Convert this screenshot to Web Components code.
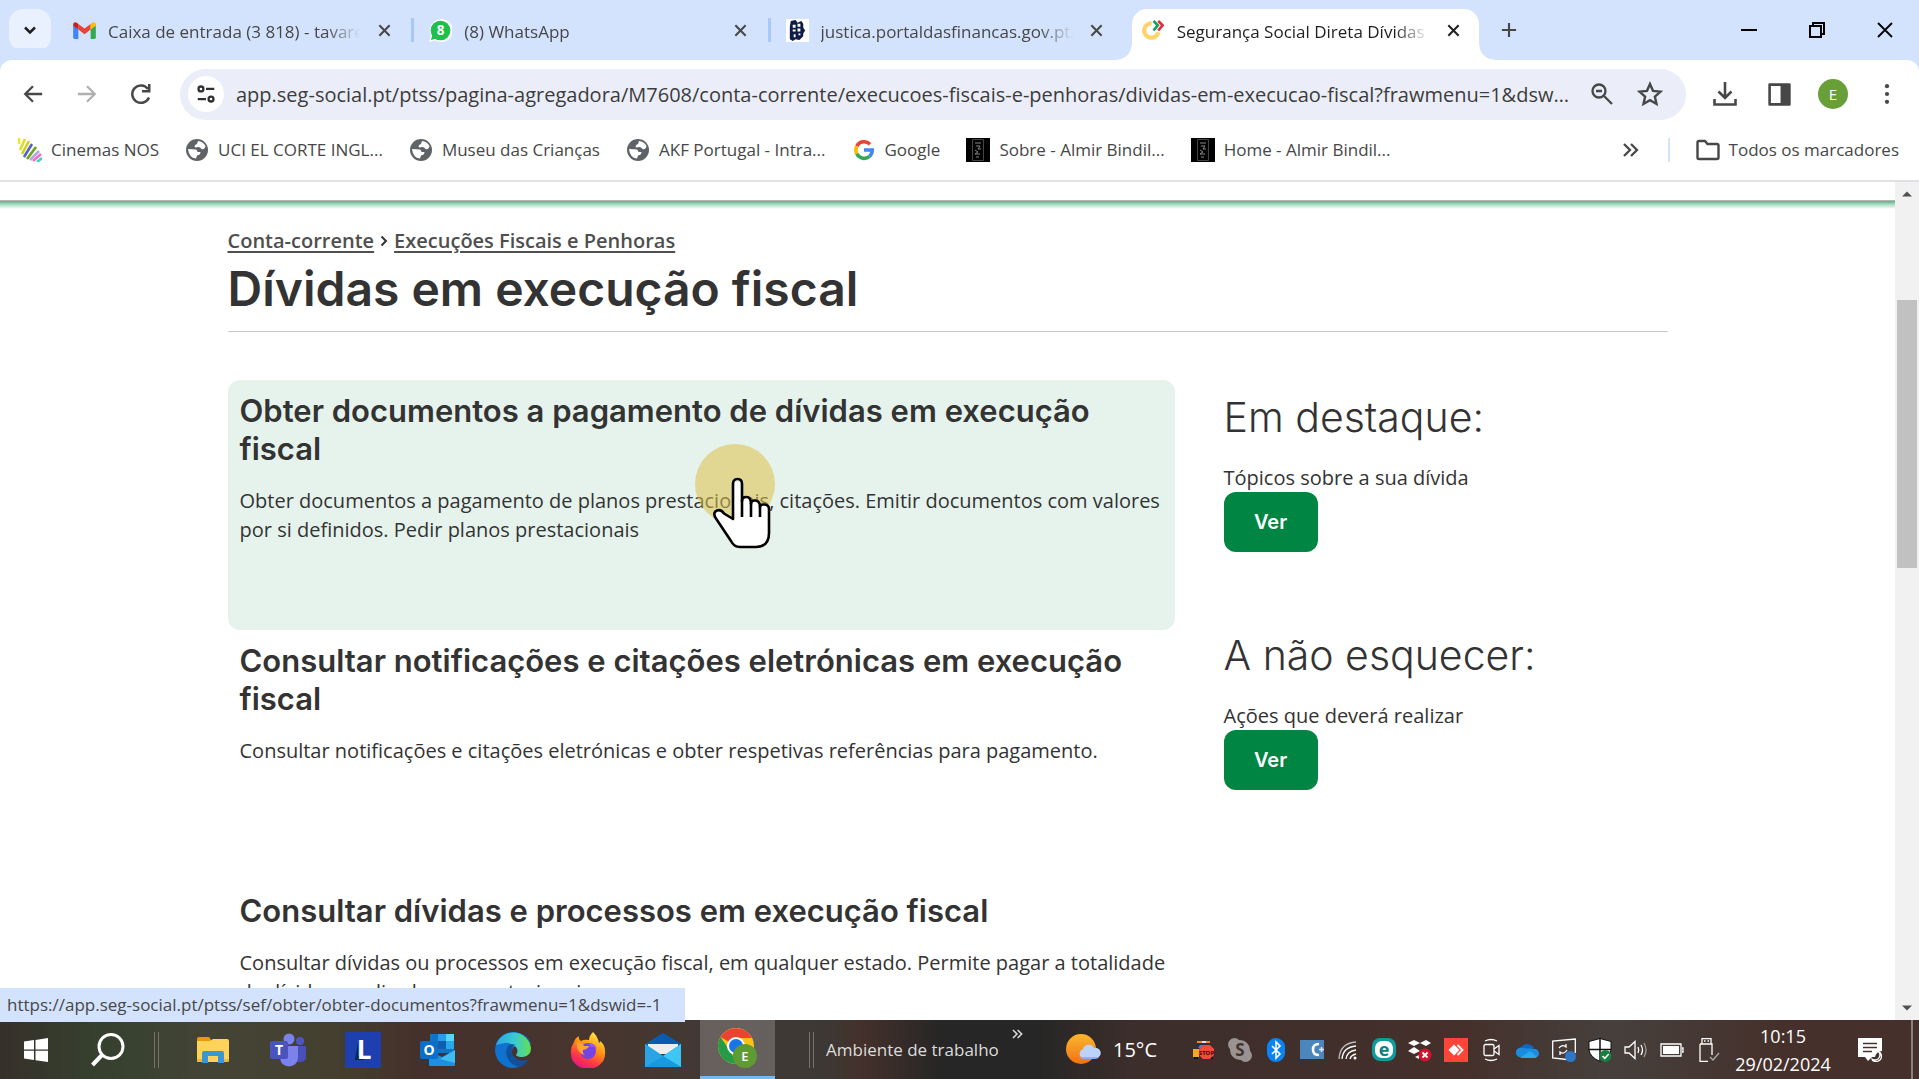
<!DOCTYPE html>
<html lang="pt">
<head>
<meta charset="utf-8">
<title>Segurança Social Direta Dívidas</title>
<style>
  html, body { height: 100%; margin: 0; }
  body {
    display: flex;
    flex-direction: column;
    overflow: hidden;
    background: #fff;
    color: #474747;
    font: 17px/24px "Open Sans", "Noto Sans", sans-serif;
  }
</style>
</head>
<body>

<tab-strip>
  <browser-tab icon="gmail" label="Caixa de entrada (3 818) - tavares"></browser-tab>
  <browser-tab icon="whatsapp" label="(8) WhatsApp"></browser-tab>
  <browser-tab icon="financas" label="justica.portaldasfinancas.gov.pt/"></browser-tab>
  <browser-tab icon="segsocial" label="Segurança Social Direta Dívidas" active></browser-tab>
</tab-strip>
<nav-bar url="app.seg-social.pt/ptss/pagina-agregadora/M7608/conta-corrente/execucoes-fiscais-e-penhoras/dividas-em-execucao-fiscal?frawmenu=1&amp;dswid=-1"></nav-bar>
<bookmarks-bar>
  <book-mark icon="nos">Cinemas NOS</book-mark>
  <book-mark icon="globe">UCI EL CORTE INGL...</book-mark>
  <book-mark icon="globe">Museu das Crianças</book-mark>
  <book-mark icon="globe">AKF Portugal - Intra...</book-mark>
  <book-mark icon="google">Google</book-mark>
  <book-mark icon="almir">Sobre - Almir Bindil...</book-mark>
  <book-mark icon="almir">Home - Almir Bindil...</book-mark>
  <book-mark slot="end" icon="folder">Todos os marcadores</book-mark>
</bookmarks-bar>

<page-view status="https://app.seg-social.pt/ptss/sef/obter/obter-documentos?frawmenu=1&amp;dswid=-1">
  <page-title>
    <a slot="path" href="#conta-corrente">Conta-corrente</a>
    <a slot="parent" href="#execucoes">Execuções Fiscais e Penhoras</a>
    Dívidas em execução fiscal
  </page-title>
  <topic-card slot="topics" heading="Obter documentos a pagamento de dívidas em execução fiscal" hovered>Obter documentos a pagamento de planos prestacionais, citações. Emitir documentos com valores por si definidos. Pedir planos prestacionais</topic-card>
  <topic-card slot="topics" heading="Consultar notificações e citações eletrónicas em execução fiscal">Consultar notificações e citações eletrónicas e obter respetivas referências para pagamento.</topic-card>
  <topic-card slot="topics" heading="Consultar dívidas e processos em execução fiscal">Consultar dívidas ou processos em execução fiscal, em qualquer estado. Permite pagar a totalidade da dívida e pedir planos prestacionais.</topic-card>
  <side-note slot="aside" heading="Em destaque:">Tópicos sobre a sua dívida</side-note>
  <side-note slot="aside" heading="A não esquecer:">Ações que deverá realizar</side-note>
</page-view>

<task-bar></task-bar>

<script>
// name: [viewBox width, viewBox height, markup]
const ICONS = {
  down: [24, 24, '<path d="M6 9l6 6 6-6" fill="none" stroke="#1f1f1f" stroke-width="3"/>'],
  close: [16, 16, '<path d="M2.5 2.5l11 11M13.5 2.5l-11 11" stroke="currentColor" stroke-width="2.2"/>'],
  plus: [18, 18, '<path d="M9 1v16M1 9h16" stroke="#474747" stroke-width="2.4"/>'],
  minimize: [16, 16, '<path d="M0 8h16" stroke="#000" stroke-width="2"/>'],
  restore: [16, 16, '<path d="M1 4h11v11H1zM4 4V1h11v11h-3" fill="none" stroke="#000" stroke-width="2"/>'],
  quit: [16, 16, '<path d="M1 1l14 14M15 1L1 15" stroke="#000" stroke-width="1.8"/>'],
  gmail: [24, 18, '<path d="M0 3v13.500q0 1.500 1.500 1.500H5.500V8z" fill="#4285f4"/><path d="M24 3v13.500q0 1.500-1.500 1.500H18.500V8z" fill="#34a853"/><path d="M5.500 8V2L12 7l6.500-5v6L12 13z" fill="#ea4335"/><path d="M18.500 8V2l1.300-1Q22-.5 23.500 1 24 1.500 24 4z" fill="#fbbc04"/><path d="M5.500 8V2L4.200 1Q2-.5.5 1 0 1.500 0 4z" fill="#c5221f"/>'],
  whatsapp: [24, 24, '<path d="M0 24l2-7A12 12 0 1 1 7 22.500z" fill="#fff"/><circle cx="12" cy="12" r="10.300" fill="#1fbf4b"/><path d="M2 22l2-7 5 5z" fill="#1fbf4b"/><text x="12" y="17" font-size="14" font-weight="700" text-anchor="middle" fill="#fff">8</text>'],
  financas: [24, 24, '<path d="M0 0h24v24H0z" fill="#fff"/><path d="M5 2l5-1 2 3 4-2 2 3v4l2 3-2 3v3l-4 4-4-1-3 2-3-2V8z" fill="#0d1d45"/><path d="M7 6h3v3H7zM12 5h3v3h-3zM7 11h3v2H7zM12 10h3v3h-3zM8 16h2v3H8zM13 15h2v2h-2z" fill="#fff"/>'],
  segsocial: [24, 22, '<path d="M10 3.500A7.500 7.500 0 1 0 17 13" fill="none" stroke="#ffd166" stroke-width="4.500"/><path d="M12 1l4.500 4.500L12 11" fill="none" stroke="#12a25a" stroke-width="2.800"/><path d="M17 1l4.500 4.500L17 11" fill="none" stroke="#e6293c" stroke-width="2.800"/>'],
  back: [24, 24, '<path d="M22 12H4M12 3.500L3.500 12l8.500 8.500" fill="none" stroke="#474747" stroke-width="2.500"/>'],
  forward: [24, 24, '<path d="M2 12h18M12 3.500l8.500 8.500-8.500 8.500" fill="none" stroke="#b0b0b0" stroke-width="2.500"/>'],
  reload: [24, 24, '<path d="M20 15.500A8.700 8.700 0 1 1 19 7" fill="none" stroke="#474747" stroke-width="2.500"/><path d="M21.500 2v8.500H13V8h6V2z" fill="#474747"/>'],
  tune: [24, 24, '<g fill="none" stroke="#303030" stroke-width="2.500"><circle cx="6.500" cy="6.500" r="2.700"/><circle cx="17.500" cy="17.500" r="2.700"/><path d="M12 6.500h9M3 17.500h9"/></g>'],
  zoomout: [24, 24, '<g fill="none" stroke="#474747" stroke-width="2.300"><circle cx="9" cy="9" r="6.500"/><path d="M14 14l8 8M6 9h6"/></g>'],
  star: [24, 24, '<path d="M12 2.800l2.800 6.300 6.900.7-5.200 4.600 1.500 6.800-6-3.500-6 3.500 1.500-6.800-5.200-4.600 6.900-.7z" fill="none" stroke="#474747" stroke-width="2.200"/>'],
  download: [24, 24, '<path d="M12 0v15M5.500 9.500l6.500 6.500 6.500-6.500M1.500 17v5.500h21V17" fill="none" stroke="#474747" stroke-width="2.600"/>'],
  panel: [24, 24, '<path d="M2.500 2.500h19v19h-19z" fill="none" stroke="#474747" stroke-width="2.500" stroke-linejoin="round"/><path d="M13 2h9v20h-9z" fill="#474747"/>'],
  more: [24, 24, '<g fill="#474747"><circle cx="12" cy="3.500" r="2.300"/><circle cx="12" cy="12" r="2.300"/><circle cx="12" cy="20.500" r="2.300"/></g>'],
  nos: [24, 24, '<g stroke-width="2.600"><path d="M1 0v6" stroke="#f5e51b"/><path d="M7 1L2 12" stroke="#d9e021"/><path d="M11 3L4 16" stroke="#d1cf1e"/><path d="M14 6L6 19" stroke="#5361c4"/><path d="M18 9L9 21" stroke="#6fa31f"/><path d="M21 13l-9 9" stroke="#b6a6e0"/><path d="M23 16l-8 7" stroke="#f26fc6"/><path d="M24 20l-5 4" stroke="#36d6c4"/></g>'],
  globe: [24, 24, '<circle cx="12" cy="12" r="11" fill="#5f6368"/><path d="M3 11q4 0 8 .5 1.500 1 1.500 2.500h3q0 3-3.500 3.500L11 20.500Q4 20 3 11zM9.500 8.500q0-2 2.500-2.500l1-3q5 .5 7.500 5-1 4-4 3-1-2-3.500-2-3 1-3.500-.5z" fill="#fff"/>'],
  google: [24, 24, '<g fill="none" stroke-width="3.600"><path d="M18 6.200A8.200 8.200 0 0 0 4.800 8.200" stroke="#ea4335"/><path d="M4.800 8.200a8.200 8.200 0 0 0 0 7.600" stroke="#fbbc04"/><path d="M4.800 15.800a8.200 8.200 0 0 0 12.700 2.500" stroke="#34a853"/><path d="M17.500 18.300A8.200 8.200 0 0 0 20.200 12H12" stroke="#4285f4"/></g>'],
  almir: [24, 24, '<path d="M0 0h24v24H0z"/><path d="M6.500 1.500h11v21h-11z" fill="none" stroke="#444"/><path d="M9 5h6M10 8h4l-2 3h3M9 12l3 2-3 2h5M10 19h3" fill="none" stroke="#888"/>'],
  chevrons: [18, 18, '<path d="M3 3l6 6-6 6M10 3l6 6-6 6" fill="none" stroke="currentColor" stroke-width="2.300"/>'],
  folder: [24, 24, '<path d="M1.500 4.500q0-1.500 1.500-1.500h6l2.500 3H21q1.500 0 1.500 1.500v12q0 1.500-1.500 1.500H3q-1.500 0-1.500-1.500z" fill="none" stroke="#474747" stroke-width="2.400"/>'],
  up: [16, 8, '<path d="M0 8l8-8 8 8z" fill="#505050"/>'],
  dn: [16, 8, '<path d="M0 0l8 8 8-8z" fill="#505050"/>'],
  hand: [62, 74, '<path d="M23 43V8q0-5 4.500-5T32 8v17q0-4 4.500-4T41 28q0-4 4.500-3.500T50 31q0-3 4.500-2.500T59 33v24q0 14-13 14H30q-6 0-9-6L5 41q-2-5 2-6.500t7 3z" fill="#fff" stroke="#000" stroke-width="2.600" stroke-linejoin="round"/><path d="M32 24v17M41 27v14M50 30v11" stroke="#000" stroke-width="2.600"/>'],

  windows: [24, 24, '<path d="M0 3.500l10-1.400v9.400H0zM11.500 1.900L24 0v11.500H11.500zM0 12.800h10v9.100L0 20.500zM11.500 12.800H24V24l-12.500-1.800z" fill="#fff"/>'],
  search: [34, 34, '<circle cx="20" cy="13.500" r="12" fill="none" stroke="#fff" stroke-width="3"/><path d="M11 22L1.500 32" stroke="#fff" stroke-width="4"/>'],
  explorer: [36, 36, '<path d="M2 7q0-2 2-2h10l3 4h-2L2 12z" fill="#e59c00"/><path d="M2 9h13l3-2h14q2 0 2 2v19q0 2-2 2H2z" fill="#ffd35a"/><path d="M7 31V21q0-2 2-2h18q2 0 2 2v10h-6v-7H13v7z" fill="#3a96d8"/><path d="M2 27h5v3H2zM29 27h5v2q0 1-2 1h-3z" fill="#e8b93a"/>'],
  teams: [36, 36, '<circle cx="30" cy="9" r="4" fill="#4f55c0"/><path d="M26 14h10v12q-1 4-6 4h-4z" fill="#4a50bb"/><circle cx="19" cy="7" r="5.500" fill="#7b83eb"/><path d="M11 14h17v12q-1 8-9 8.500Q11 34 10 26z" fill="#7b83eb"/><rect y="9" width="18" height="18" rx="2" fill="#4b53bc"/><text x="9" y="23" font-size="14" font-weight="700" text-anchor="middle" fill="#fff">T</text>'],
  lidl: [36, 36, '<path d="M0 0h36v36H0z" fill="#1d3fb0"/><path d="M13 10l-3 18h10l-7-4z" fill="#07274c"/><text x="19" y="27" font-size="26" font-weight="700" text-anchor="middle" fill="#fff">L</text>'],
  outlook: [36, 36, '<path d="M10 2h24v19H10z" fill="#1272c4"/><path d="M18 2h8v7h-8z" fill="#2a9be6"/><path d="M26 2h8v7h-8z" fill="#50d9ff"/><path d="M18 9h8v8h-8z" fill="#0f5fae"/><path d="M26 9h8v8h-8z" fill="#28a8ea"/><path d="M9 19l13 6 13-7v15q0 1-1 1H10q-1 0-1-1z" fill="#1e8fe0"/><path d="M20 27l15-9v13z" fill="#3dbcf2"/><rect y="9" width="18" height="18" rx="2" fill="#0b6fca"/><text x="9" y="23" font-size="14" font-weight="700" text-anchor="middle" fill="#fff">O</text>'],
  edge: [36, 36, '<defs><linearGradient id="edge-sea"><stop offset="0" stop-color="#2aa6ea"/><stop offset=".55" stop-color="#3accd0"/><stop offset="1" stop-color="#62e04c"/></linearGradient></defs><path d="M18 0A18 18 0 1 0 33 28q-6 3-11 0-6-4-5-10 1-3 4-4L36 12A18 18 0 0 0 18 0z" fill="#0f72cf"/><path d="M1 13A18 18 0 0 1 36 16q0 8-8 9-6 0-7-2 3-4 0-8-5-5-11-4-6 1-9 2z" fill="url(#edge-sea)"/><path d="M13 14q-3 5-1 11 3 7 11 10 7-1 11-8-6 3-12 0-6-4-5-9 0-5 4-5-5-2-8 1z" fill="#12509c"/>'],
  firefox: [36, 36, '<defs><linearGradient id="fox-fur" x1=".8" y1="0" x2=".3" y2="1"><stop offset="0" stop-color="#fff44f"/><stop offset=".4" stop-color="#ff980e"/><stop offset=".75" stop-color="#ff3647"/><stop offset="1" stop-color="#e31587"/></linearGradient></defs><path d="M23 0q-4 4-4 8-5-1-8 1-3-2-2-5-4 2-5 6-4 6-3 12a17 15 0 0 0 34 0q1-9-5-13 0 2-1 2-1-6-6-11z" fill="url(#fox-fur)"/><circle cx="18" cy="19" r="8" fill="#7542e5"/><path d="M7 10q5 0 7 4h5q-1 3-6 4-1 3 2 5-6-1-8-8z" fill="#ffa436"/><path d="M19 11q6 0 8 6-3-3-7-2z" fill="#9059ff"/>'],
  mail: [36, 36, '<path d="M0 12L18 1l18 11v7H0z" fill="#0a5cb0"/><path d="M3 12h30v10H3z" fill="#eee"/><path d="M0 12l18 12 18-12v23H0z" fill="#28b0ec"/><path d="M0 12l18 12L0 35z" fill="#2aa4e4"/><path d="M18 24l18-12v23z" fill="#3ec6f4"/><path d="M0 35l18-11 18 11z" fill="#189ae0"/>'],
  chrome: [40, 40, '<circle cx="18" cy="18" r="18" fill="#fbc117"/><path d="M18 18L2.500 9A18 18 0 0 1 34 10H18z" fill="#ea4335"/><path d="M2.500 9L14 26l4 10A18 18 0 0 1 2.500 9z" fill="#259b47"/><circle cx="18" cy="18" r="9" fill="#fff"/><circle cx="18" cy="18" r="7" fill="#1a73e8"/><circle cx="27" cy="28" r="12" fill="#5f9b33"/><text x="27" y="33" font-size="13" font-weight="600" text-anchor="middle" fill="#fff">E</text>'],
  weather: [36, 34, '<defs><linearGradient id="sun" x2="0" y2="1"><stop offset="0" stop-color="#fbb72c"/><stop offset="1" stop-color="#f0701a"/></linearGradient></defs><circle cx="16" cy="16" r="15" fill="url(#sun)"/><path d="M17 25a5 5 0 0 1 1-9 6 6 0 0 1 11-1 5 5 0 0 1 3 10z" fill="#bcd3f8"/><path d="M15 24h19q-1 2-4 2H18q-2 0-3-2z" fill="#8fb0e8"/>'],

  taxi: [24, 24, '<path d="M6 5h10l4 6v8H2v-8z" fill="#2b2f45"/><path d="M1 11h6v8H1z" fill="#f4a91f"/><path d="M5 3h13v2H5z" fill="#f08a1d"/><path d="M10 3h4v2h-4z" fill="#cfe2ff"/><path d="M8 7h8l2 3H6z" fill="#4a7fd0"/><path d="M2 19h4v2H2zM17 19h4v2h-4z" fill="#111"/><path d="M11 7h7l4 4v6l-4 4h-7l-4-4v-6z" fill="#ee4d3c"/><text x="14.500" y="16.500" font-size="6" font-weight="700" text-anchor="middle" fill="#400">STOP</text>'],
  skype: [24, 24, '<circle cx="12" cy="12" r="10" fill="#9b9391"/><circle cx="6.500" cy="6.500" r="6.500" fill="#9b9391"/><circle cx="17.500" cy="17.500" r="6.500" fill="#9b9391"/><text x="12" y="18" font-size="17" font-weight="700" text-anchor="middle" fill="#44322e">S</text>'],
  bluetooth: [24, 24, '<rect x="3" width="18" height="24" rx="9" fill="#0a84f5"/><path d="M8 8l8 8-4 4V4l4 4-8 8" fill="none" stroke="#fff" stroke-width="1.600"/>'],
  cplus: [24, 24, '<path d="M0 2h24v19H0z" fill="#4c86bd"/><path d="M19 6q-6 0-6 5.500t6 5.500" fill="none" stroke="#fff" stroke-width="2.600"/><path d="M19 11.500h5M21.500 9v5" stroke="#dce9f5" stroke-width="1.500"/>'],
  wifi: [24, 24, '<g fill="none" stroke="#fff" stroke-width="1.300"><path d="M3 21Q4 5 20 4" stroke="#bbb"/><path d="M6 21Q7 9 20 8"/><path d="M10 21q1-8 10-9"/><path d="M14 21q1-4 6-5"/></g><circle cx="19" cy="20" r="1.500" fill="#fff"/>'],
  eset: [24, 24, '<rect width="24" height="23" rx="8" fill="#0f9a9c"/><rect x="3" y="3" width="18" height="17" rx="7" fill="#fff"/><text x="12" y="17.500" font-size="18" font-weight="700" text-anchor="middle" fill="#0b8083">e</text>'],
  dropbox: [24, 24, '<path d="M0 5l6-3 6 3-6 3zM12 5l6-3 5 3-5 3zM0 13l6-4 6 4-6 3zM7 19l4-2v4z" fill="#fff"/><circle cx="17" cy="17" r="6.500" fill="#d3122f"/><path d="M14.500 14.500l5 5M19.500 14.500l-5 5" stroke="#fff" stroke-width="1.800"/>'],
  anydesk: [24, 24, '<path d="M0 0h24v24H0z" fill="#ff4438"/><path d="M4.500 12L10 6.500l5.500 5.500-5.500 5.500z" fill="#fff"/><path d="M13.500 7l5 5-5 5" fill="none" stroke="#fff" stroke-width="1.800"/>'],
  meet: [24, 24, '<g fill="none" stroke="#fff" stroke-width="1.300"><rect x="4" y="6.500" width="10" height="11" rx="1.500"/><path d="M14 11l5-3.500v9L14 13M5 3q6-3 12 0M5 21q6 3 12 0"/></g>'],
  onedrive: [24, 24, '<path d="M4 18a5 5 0 0 1 1-9 8 8 0 0 1 13 1z" fill="#1068c4"/><path d="M3 19a4.500 4.500 0 0 1 3-9l14 1a4.500 4.500 0 0 1 1 8z" fill="#1b8de0"/><path d="M4 20l10-7 7 6q-1 1-3 1z" fill="#2aa9f0"/>'],
  sync: [24, 24, '<g fill="none" stroke="#fff" stroke-width="1.300"><path d="M15 21.500L.7 20V3L23.300 1v14"/><path d="M7 10q3-4 7-1V6M15 12q-3 5-7 2v3"/></g><circle cx="18.500" cy="18.500" r="5.500" fill="#2f76c7"/>'],
  shield: [24, 24, '<path d="M12 .5L1 3.500V12q1 7 11 11.500Q22 19 23 12V3.500z" fill="#fff" stroke="#111"/><path d="M12 0v23M1 11.500h22" stroke="#111" stroke-width="1.500"/><circle cx="17.500" cy="18" r="6" fill="#15803d"/><path d="M14.500 18l2.300 2.300 4-4.300" fill="none" stroke="#fff" stroke-width="1.500"/>'],
  volume: [24, 24, '<g fill="none" stroke="#fff" stroke-width="1.300"><path d="M1 9h4l6-5.500v17L5 15H1zM14 9q1.500 3 0 6M17 7q3 5 0 10"/><path d="M20 5q4 7 0 14" stroke="#999"/></g>'],
  battery: [24, 24, '<path d="M1 6h20v12H1zM22 10h1v4h-1" fill="none" stroke="#fff" stroke-width="1.300"/><path d="M3 8h16v8H3z" fill="#fff"/>'],
  usb: [24, 24, '<path d="M6 6V.7h9V6M4 6h12v11M12 23.300H4V6M8 3h1.500M11.500 3H13" fill="none" stroke="#fff" stroke-width="1.300"/><path d="M14 19l3 3 6-7" fill="none" stroke="#aaa" stroke-width="1.300"/>'],
  notice: [24, 24, '<path d="M0 0h24v13a7 7 0 0 0-7 6h-3l-4 4-3-4H0z" fill="#fff"/><path d="M5 5.500h14M5 9.500h14M5 13.500h9" stroke="#4a302b" stroke-width="1.400"/><path d="M20 13q4 4 0 8-3 2-6 0 0 2 3 2.500 6 0 6.500-5 0-4-3.500-5.500z" fill="none" stroke="#fff" stroke-width="1.300"/>'],
};

function icon(name, size) {
  const [w, h, body] = ICONS[name];
  return `<svg viewBox="0 0 ${w} ${h}" width="${size}" height="${Math.round(size * h / w)}" aria-hidden="true">${body}</svg>`;
}

const BASE = `
:host, *, *::before, *::after { box-sizing: border-box; }
svg { display: block; flex-shrink: 0; }
svg text { font-family: "Open Sans", sans-serif; }
button {
  display: grid;
  place-items: center;
  padding: 0;
  border: 0;
  background: none;
  color: inherit;
  font: inherit;
  cursor: pointer;
}
`;

// Shared plumbing: every element renders once into an open root.
class BaseElement extends HTMLElement {
  constructor() {
    super();
    this.attachShadow({ mode: 'open' });
  }
  connectedCallback() {
    this.shadowRoot.innerHTML = `<style>${BASE}${this.styles()}</style>${this.render()}`;
  }
  attr(name) {
    return (this.getAttribute(name) || '').replace(/&/g, '&amp;').replace(/"/g, '&quot;');
  }
}

customElements.define('tab-strip', class extends BaseElement {
  styles() {
    return `
:host {
  display: flex;
  align-items: center;
  height: 60px;
  flex-shrink: 0;
  padding-left: 9px;
  background: #d3e3fd;
}
.menu {
  width: 42px; height: 42px;
  margin-right: 6px;
  border-radius: 14px;
  background: #e9f0fe;
}
.tabs {
  display: flex;
  flex: 0 1 1425px;
  min-width: 0;
  align-self: stretch;
}
.add { width: 54px; height: 42px; }
.window { display: flex; margin-left: auto; align-self: stretch; }
.window button { width: 68px; }
`;
  }
  render() {
    return `
<button class="menu" aria-label="Pesquisar separadores">${icon('down', 20)}</button>
<div class="tabs"><slot></slot></div>
<button class="add" aria-label="Novo separador">${icon('plus', 16)}</button>
<div class="window">
  <button aria-label="Minimizar">${icon('minimize', 16)}</button>
  <button aria-label="Restaurar">${icon('restore', 16)}</button>
  <button aria-label="Fechar">${icon('quit', 16)}</button>
</div>`;
  }
});

customElements.define('browser-tab', class extends BaseElement {
  styles() {
    return `
:host {
  display: flex;
  flex: 1;
  min-width: 0;
  align-items: center;
  position: relative;
  padding: 0 17px 0 16px;
}
:host::after {
  content: "";
  width: 3px; height: 24px;
  position: absolute;
  right: -1px;
  background: #a8c7fa;
}
:host(:nth-child(3))::after, :host([active])::after { display: none; }
:host([active]) { color: #1f1f1f; }
:host([active])::before {
  content: "";
  position: absolute;
  inset: 9px 3px 0 6px;
  border-radius: 15px 15px 0 0;
  background: #fff;
}
.foot { display: none; }
:host([active]) .foot {
  display: block;
  position: absolute;
  bottom: 0;
  width: 15px; height: 15px;
  background: radial-gradient(circle at 0 0, #d3e3fd 14px, #fff 15px);
}
:host([active]) .foot.l { left: -9px; }
:host([active]) .foot.r { right: -12px; background: radial-gradient(circle at 100% 0, #d3e3fd 14px, #fff 15px); }
.tab {
  display: flex;
  align-items: center;
  position: relative;
  flex: 1;
  min-width: 0;
  gap: 12px;
}
.label {
  flex: 1;
  padding-top: 3px;
  overflow: hidden;
  white-space: nowrap;
  text-align: left;
  -webkit-mask-image: linear-gradient(90deg, #000 calc(100% - 34px), transparent);
  mask-image: linear-gradient(90deg, #000 calc(100% - 34px), transparent);
}
.close { position: relative; width: 24px; height: 24px; margin-left: 12px; }
`;
  }
  render() {
    return `
<span class="foot l"></span><span class="foot r"></span>
<button class="tab">${icon(this.attr('icon'), 23)}<span class="label">${this.attr('label')}</span></button>
<button class="close" aria-label="Fechar separador">${icon('close', 15)}</button>`;
  }
});

customElements.define('nav-bar', class extends BaseElement {
  styles() {
    return `
:host {
  display: flex;
  align-items: center;
  flex-shrink: 0;
  height: 68px;
  padding: 0 5px 0 6px;
  background: #fff;
  border-radius: 12px 12px 0 0;
  box-shadow: 0 -12px #d3e3fd;
}
tab-strip { position: relative; }
:host > button { width: 54px; height: 51px; }
.box {
  display: flex;
  flex: 1;
  min-width: 0;
  align-items: center;
  height: 51px;
  margin: 0 12px;
  padding: 0 12px 0 8px;
  border-radius: 26px;
  background: #ebeef8;
}
.site {
  width: 36px; height: 36px;
  margin-right: 12px;
  border-radius: 50%;
  background: #fff;
}
.box .act { width: 48px; height: 48px; }
input {
  flex: 1;
  min-width: 0;
  height: 40px;
  margin-right: 8px;
  padding: 0;
  border: 0;
  outline: 0;
  background: none;
  color: #3c3c3c;
  font: 20px/28px "Open Sans", sans-serif;
  text-overflow: ellipsis;
}
.avatar span {
  width: 30px; height: 30px;
  border-radius: 50%;
  background: #689f38;
  color: #fff;
  font-size: 15px;
  line-height: 30px;
}
`;
  }
  render() {
    return `
<button aria-label="Anterior">${icon('back', 22)}</button>
<button aria-label="Seguinte">${icon('forward', 22)}</button>
<button aria-label="Recarregar">${icon('reload', 24)}</button>
<div class="box">
  <button class="site" aria-label="Informações do site">${icon('tune', 22)}</button>
  <input aria-label="Endereço" spellcheck="false" value="${this.attr('url')}">
  <button class="act" aria-label="Zoom">${icon('zoomout', 24)}</button>
  <button class="act" aria-label="Adicionar marcador">${icon('star', 26)}</button>
</div>
<button aria-label="Transferências">${icon('download', 24)}</button>
<button aria-label="Painel lateral">${icon('panel', 25)}</button>
<button class="avatar" aria-label="Perfil"><span>E</span></button>
<button aria-label="Mais">${icon('more', 22)}</button>`;
  }
});

customElements.define('bookmarks-bar', class extends BaseElement {
  styles() {
    return `
:host {
  display: flex;
  align-items: center;
  flex-shrink: 0;
  gap: 26px;
  height: 54px;
  padding: 0 20px 8px 18px;
  border-bottom: 2px solid #dfe1e5;
  background: #fff;
  white-space: nowrap;
}
.more { width: 24px; height: 24px; margin-left: auto; }
.rule { width: 2px; height: 24px; background: #d3e3fd; }
`;
  }
  render() {
    return `
<slot></slot>
<button class="more" aria-label="Mais marcadores">${icon('chevrons', 18)}</button>
<span class="rule"></span>
<slot name="end"></slot>`;
  }
});

customElements.define('book-mark', class extends BaseElement {
  styles() {
    return `
:host { display: block; }
a {
  display: flex;
  align-items: center;
  gap: 9px;
  color: inherit;
  text-decoration: none;
}
`;
  }
  render() {
    return `<a href="#">${icon(this.attr('icon'), 24)}<slot></slot></a>`;
  }
});

customElements.define('page-view', class extends BaseElement {
  styles() {
    return `
:host {
  display: flex;
  flex: 1;
  min-height: 0;
  position: relative;
  color: #333;
}
.view {
  flex: 1;
  min-width: 0;
  overflow: hidden;
  padding-top: 18px;
}
.edge {
  height: 9px;
  background: linear-gradient(#b5b5b5 1px, #58b285 1px, #a5d5bd 4px, #fff 9px);
}
.wrap {
  max-width: 1440px;
  margin: 0 auto;
  padding-top: 18px;
}
.cols {
  display: grid;
  grid-template-columns: minmax(0, 947fr) minmax(0, 444fr);
  gap: 49px;
  padding-top: 48px;
}
.bar {
  display: flex;
  flex-direction: column;
  align-items: center;
  width: 24px;
  padding: 9px 0;
  background: #f1f1f1;
}
.track { flex: 1; width: 20px; padding-top: 103px; }
.thumb { height: 38%; background: #c1c1c1; }
.bar svg { width: 10px; height: 6px; }
.status {
  position: absolute;
  left: 0;
  bottom: -2px;
  z-index: 1;
  padding: 5px 24px 5px 7px;
  background: #d3e3fd;
  color: #474747;
}
.pointer { position: absolute; left: 695px; top: 262px; width: 80px; height: 104px; }
.halo {
  height: 80px;
  border-radius: 50%;
  background: rgba(223,192,72,0.55);
}
.pointer svg { position: absolute; left: 15px; top: 32px; }
`;
  }
  render() {
    return `
<main class="view">
  <div class="edge"></div>
  <div class="wrap">
    <slot></slot>
    <div class="cols">
      <div><slot name="topics"></slot></div>
      <aside><slot name="aside"></slot></aside>
    </div>
  </div>
</main>
<div class="bar">
  ${icon('up', 12)}
  <div class="track"><div class="thumb"></div></div>
  ${icon('dn', 12)}
</div>
<div class="status">${this.attr('status')}</div>
<div class="pointer"><div class="halo"></div>${icon('hand', 62)}</div>`;
  }
});

customElements.define('page-title', class extends BaseElement {
  styles() {
    return `
:host {
  display: block;
  padding-bottom: 8px;
  border-bottom: 1px solid #c8c8c8;
}
nav {
  display: flex;
  align-items: center;
  gap: 5px;
  font-size: 20px;
  font-weight: 600;
  line-height: 28px;
}
::slotted(a) { color: #4f4f4f; text-underline-offset: 3px; }
h1 {
  margin: 0;
  font: 600 48px/68px Inter, sans-serif;
}
`;
  }
  render() {
    return `
<nav aria-label="Caminho"><slot name="path"></slot><svg viewBox="0 0 10 12" width="10" height="12"><path d="M2.500 1.500L7 6l-4.500 4.500" fill="none" stroke="#333" stroke-width="2"/></svg><slot name="parent"></slot></nav>
<h1><slot></slot></h1>`;
  }
});

customElements.define('topic-card', class extends BaseElement {
  styles() {
    return `
:host {
  display: block;
  min-height: 250px;
  padding: 12px 4px 12px 12px;
  border-radius: 12px;
}
:host([hovered]) { background: #e6f3ec; }
h2 {
  margin: 0 0 18px;
  font: 600 31px/38px Inter, sans-serif;
}
a { color: inherit; text-decoration: none; }
p { margin: 0; font-size: 20px; line-height: 29px; }
`;
  }
  render() {
    return `<h2><a href="#">${this.attr('heading')}</a></h2><p><slot></slot></p>`;
  }
});

customElements.define('side-note', class extends BaseElement {
  styles() {
    return `
:host { display: block; height: 238px; padding-top: 7px; }
h2 {
  margin: 0 0 16px;
  font: 300 41px/60px Inter, sans-serif;
}
p { margin: 0; font-size: 20px; line-height: 29px; }
button {
  width: 94px; height: 60px;
  border-radius: 12px;
  background: #008542;
  color: #fff;
  font: 600 20px/28px Inter, sans-serif;
}
`;
  }
  render() {
    return `<h2>${this.attr('heading')}</h2><p><slot></slot></p><button>Ver</button>`;
  }
});

customElements.define('task-bar', class extends BaseElement {
  styles() {
    return `
:host {
  display: flex;
  flex-shrink: 0;
  height: 59px;
  color: #fff;
  background: linear-gradient(90deg, #36302a 0, #35402e 5%, #444436 11%, #44402f 17%, #45302b 22%, #47362f 32%, #403a36 39%, #3c3835 43%, #44302a 45%, #262626 49%, #262626 54%, #3c2e2b 59%, #45302b 76%, #46403c 84%, #45302b 93%, #46302b 100%);
}
button { height: 59px; }
.sys { width: 72px; }
.app { width: 75px; }
.app.on {
  background: rgba(255,255,255,0.2);
  border-bottom: 3px solid #76b9ed;
}
.grip {
  width: 5px; height: 36px;
  border: solid #77736b;
  border-width: 0 1px;
}
.sys + .grip { margin: 12px 16px 0 10px; }
.desk {
  display: flex;
  align-items: center;
  gap: 12px;
  margin-left: 34px;
  color: #dcdcdc;
}
.desk svg { margin-bottom: 32px; }
.weather {
  display: flex;
  align-items: center;
  gap: 12px;
  margin-left: auto;
  margin-right: 29px;
  font-size: 20px;
}
.tray { display: flex; }
.tray button { width: 36px; }
.clock {
  width: 114px;
  align-content: center;
  font-size: 18px;
  line-height: 28px;
}
.notice { width: 60px; }
.peek { width: 8px; margin-left: 11px; border-left: 2px solid #8a807c; }
`;
  }
  render() {
    const apps = { explorer: 'Explorador', teams: 'Teams', lidl: 'L', outlook: 'Outlook', edge: 'Edge', firefox: 'Firefox', mail: 'Correio', chrome: 'Chrome' };
    const tray = ['taxi', 'skype', 'bluetooth', 'cplus', 'wifi', 'eset', 'dropbox', 'anydesk', 'meet', 'onedrive', 'sync', 'shield', 'volume', 'battery', 'usb'];
    return `
<button class="sys" aria-label="Iniciar">${icon('windows', 24)}</button>
<button class="sys" aria-label="Procurar">${icon('search', 34)}</button>
<span class="grip"></span>
${Object.keys(apps).map(k => `<button class="app${k === 'chrome' ? ' on' : ''}" aria-label="${apps[k]}">${icon(k, k === 'chrome' ? 40 : 36)}</button>`).join('')}
<div class="desk"><span class="grip"></span><span>Ambiente de trabalho</span>${icon('chevrons', 12)}</div>
<div class="weather">${icon('weather', 36)}<span>15°C</span></div>
<div class="tray">${tray.map(k => `<button aria-label="${k}">${icon(k, 24)}</button>`).join('')}</div>
<button class="clock"><time>10:15</time><time>29/02/2024</time></button>
<button class="notice" aria-label="Notificações">${icon('notice', 24)}</button>
<span class="peek"></span>`;
  }
});
</script>
</body>
</html>
